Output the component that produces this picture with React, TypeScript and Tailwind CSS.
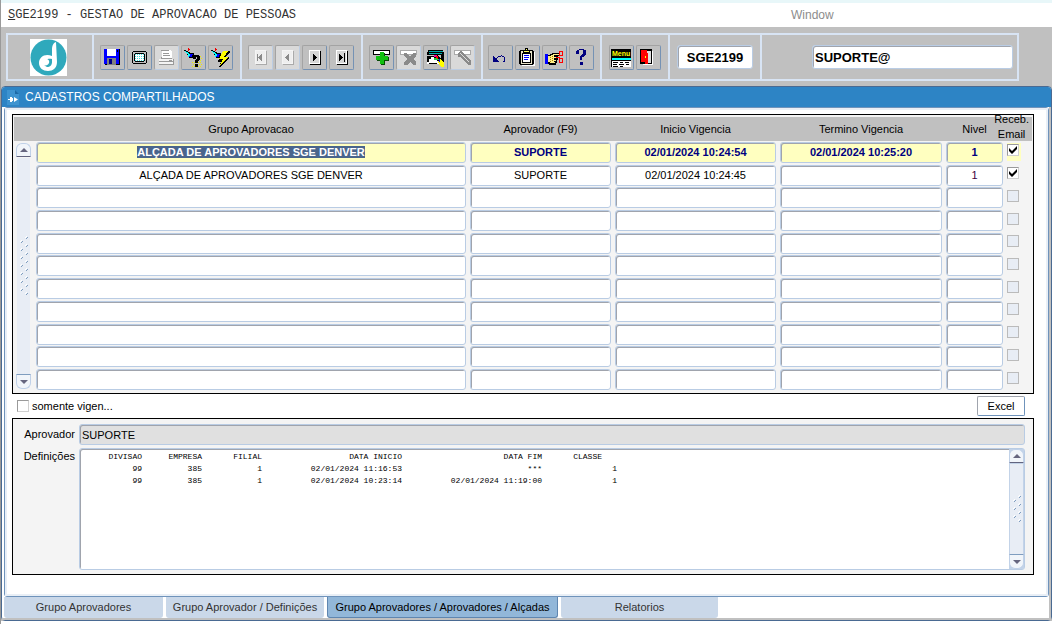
import { useEffect, useRef, type ReactNode } from 'react'

type Approver = { group: string; approver: string; start: string; end: string; level: string; email: boolean }

const approvers: (Approver | null)[] = [
  { group: 'ALÇADA DE APROVADORES SGE DENVER', approver: 'SUPORTE', start: '02/01/2024 10:24:54', end: '02/01/2024 10:25:20', level: '1', email: true },
  { group: 'ALÇADA DE APROVADORES SGE DENVER', approver: 'SUPORTE', start: '02/01/2024 10:24:45', end: '', level: '1', email: true },
  null, null, null, null, null, null, null, null, null,
]

const definitions = [
  ['99', '385', '1', '02/01/2024 11:16:53', '***', '1'],
  ['99', '385', '1', '02/01/2024 10:23:14', '02/01/2024 11:19:00', '1'],
]

const tabs = [
  { label: 'Grupo Aprovadores', width: 'w-[159px]' },
  { label: 'Grupo Aprovador / Definições', width: 'w-[158px]' },
  { label: 'Grupo Aprovadores / Aprovadores / Alçadas', width: 'w-[231px]', active: true },
  { label: 'Relatorios', width: 'w-[157px]' },
]

const field = 'border border-[#b9cce4] rounded-[3px] shadow-[inset_1px_1px_0_#a0a4ad] outline-none'

function Icon({ children }: { children: ReactNode }) {
  return <svg width="20" height="20" viewBox="0 0 20 20" overflow="visible" shapeRendering="crispEdges" aria-hidden="true">{children}</svg>
}

function ToolButton({ label, disabled, children }: { label: string; disabled?: boolean; children: ReactNode }) {
  return (
    <button
      type="button"
      aria-label={label}
      title={label}
      disabled={disabled}
      className={`w-[25px] h-[25px] p-px rounded-[2px] border border-t-[#a3a3a3] border-l-[#a3a3a3] ${disabled ? 'bg-[#d9d9d9] border-r-[#bccde3] border-b-[#bccde3]' : 'border-r-[#7592b4] border-b-[#7592b4]'}`}
    >
      <Icon>{children}</Icon>
    </button>
  )
}

function Group({ children, className = 'pl-[6px] pr-[7px]' }: { children: ReactNode; className?: string }) {
  return <div className={`flex items-center gap-[2px] border-r-2 border-[#d8e4f4] ${className}`}>{children}</div>
}

const Torch = () => (
  <g>
    <path d="M1 3h2v1h2v1h2v1h4v3h-1v2h-4v-1h-1v-2h-1v-2h-1v-1h-1v-1h-1z" fill="#000" />
    <path d="M2 4h1v1h2v1h1v1h1v1h-2v-1h-1v-1h-1v-1h-1z" fill="#0ff" />
    <path d="M7 7h3v1h-1v2h-3v-1h1z" fill="#00f" />
    <path d="M5 7h2v2h-1v1h-1z" fill="#0ff" />
    <path d="M5 1h1v1h1v1h-1v1h-1z" fill="#e00" />
  </g>
)

const Sheet = ({ off, children }: { off?: boolean; children: ReactNode }) => (
  <g>
    <path d="M6 4h11v14h-11z" fill={off ? '#aaa' : '#000'} />
    <path d="M5 3h11v14h-11z" fill={off ? '#f4f4f4' : '#fff'} />
    <path d="M6 4h9v12h-9z" fill={off ? '#eee' : '#d6d6d6'} />
    <g fill={off ? '#8a8a8a' : '#000'}>{children}</g>
  </g>
)

function Logo() {
  return (
    <svg width="37" height="37" viewBox="0 0 37 37" role="img" aria-label="Denver">
      <rect width="37" height="37" fill="#fff" />
      <circle cx="18.500" cy="18.500" r="18" fill="#2fa9bc" />
      <path d="M26 3c-3 1-4 4-4 8v6c-7-3-13 1-13 7 0 5 4 8 9 8s9-3 9-9z" fill="#fff" />
      <path d="M22 20c-3-1-8 0-8 4 0 2 1 3 3 4 3 0 5-2 5-5z" fill="#2fa9bc" />
      <path d="M14 20c3-1 6 1 5 4-1 2-3 3-5 2z" fill="#fff" />
    </svg>
  )
}

function ScrollBar({ grip, label }: { grip: string; label: string }) {
  return (
    <div aria-label={label} role="group" className="flex h-full w-[15px] flex-col items-center">
      <button type="button" aria-label="Subir" className="flex h-[14px] w-full shrink-0 items-center justify-center rounded-t-[6px] border border-[#c0d1e8] border-b-[#62647f] bg-[#f1f5fa]">
        <svg width="8" height="4" viewBox="0 0 8 4"><path d="M4 0l4 4H0z" fill="#66667f" /></svg>
      </button>
      <div className="mt-px flex w-[13px] flex-1 items-center justify-center bg-[#e8edf5]">
        <svg width="9" className={grip} aria-hidden="true">
          <defs>
            <pattern id={`grip-${label}`} width="9" height="8" patternUnits="userSpaceOnUse">
              <path d="M6 2l2-2M1 6l2-2" stroke="#fff" />
              <path d="M7 3l2-2M2 7l2-2" stroke="#7f9dbf" />
            </pattern>
          </defs>
          <rect width="9" height="100%" fill={`url(#grip-${label})`} />
        </svg>
      </div>
      <button type="button" aria-label="Descer" className="flex h-[15px] w-full shrink-0 items-center justify-center rounded-b-[6px] border border-[#c0d1e8] border-t-[#7f9dbf] bg-[#f1f5fa]">
        <svg width="8" height="4" viewBox="0 0 8 4"><path d="M0 0h8L4 4z" fill="#66667f" /></svg>
      </button>
    </div>
  )
}

function Toolbar() {
  return (
    <div className="bg-[#c0c0c0] pt-[6px] pb-[5px] pl-[5px] pr-[33px]">
      <div className="flex h-[48px] border-2 border-r-0 border-[#d8e4f4]">
        <Group className="w-[86px] pr-[3px] justify-center"><Logo /></Group>
        <Group>
          <ToolButton label="Salvar">
            <path d="M2 2h16v16h-15v-1h-1z" fill="#000" />
            <path d="M2 2h15v15h-15z" fill="#00f" />
            <path d="M5 2h9v7h-9z" fill="#fff" />
            <path d="M15 3h1v2h-1z" fill="#000" />
            <path d="M5 11h9v7h-9z" fill="#808080" />
            <path d="M7 12h3v5h-3z" fill="#000080" />
          </ToolButton>
          <ToolButton label="Tela">
            <path d="M4 4h13v1h1v11h-1v1h-13v-1h-1v-11h1z" fill="#000" />
            <path d="M5 6h11v9h-11z" fill="#c0c0c0" />
            <path d="M6 6h9v1h1v7h-1v1h-9v-1h-1v-7h1z" fill="#000" />
            <path d="M6 7h9v7h-9z" fill="#fff" />
            <path d="M6 7.500h9M6 9.500h9M6 11.500h9M6 13.500h9" stroke="#4dd" strokeDasharray="1 1" />
            <path d="M4.500 5.500h12v10h-12z" fill="none" stroke="#c0c0c0" />
          </ToolButton>
          <ToolButton label="Imprimir" disabled>
            <path d="M6 3h8l2 2v7h-10z" fill="#fff" />
            <path d="M5 3h8v1h-8zM7 6h6v1h-6zM7 8h7v1h-7zM5 10h1v1h10v1h-11z" fill="#999" />
            <path d="M3 12h14v5h-14z" fill="#f4f4f4" />
            <path d="M3 14h14v1h-14zM3 17h15v1h-15zM17 12h1v6h-1zM13 13h3v1h-3z" fill="#999" />
          </ToolButton>
          <ToolButton label="Consultar ajuda">
            <Torch />
            <path d="M15 9.500h4M16 11.500h3M15 13.500h4M9 15.500h10M10 17.500h9M9 19.500h10" stroke="#ee0" strokeDasharray="1 1" />
            <path d="M10 9h1v-1h5v1h1v4h-1v1h-1v2h-3v-3h1v-1h1v-2h-1v2h-3zM12 17h3v3h-3z" fill="#000" />
          </ToolButton>
          <ToolButton label="Executar consulta">
            <Torch />
            <path d="M13 4h7v1l-4 5h3v2l-9 8h-1l2-5h-3v-2l4-4z" fill="#000" />
            <path d="M13 4h5l-4 6h4l-8 8 3-6h-4z" fill="#ff0" />
          </ToolButton>
        </Group>
        <Group>
          <ToolButton label="Primeiro" disabled><Sheet off><path d="M7 7h1v7h-1zM12 7v7l-4-3.500z" /></Sheet></ToolButton>
          <ToolButton label="Anterior" disabled><Sheet off><path d="M12 7v7l-4-3.500z" /></Sheet></ToolButton>
          <ToolButton label="Proximo"><Sheet><path d="M9 6v9l4-4.500z" /></Sheet></ToolButton>
          <ToolButton label="Ultimo"><Sheet><path d="M8 6v9l4-4.500zM13 6h1v9h-1z" /></Sheet></ToolButton>
        </Group>
        <Group className="px-[6px]">
          <ToolButton label="Inserir">
            <path d="M2 3h17v5h-17z" fill="#000" />
            <path d="M3 4h15v3h-15z" fill="#fff" />
            <path d="M10 6h4v4h4v4h-4v4h-4v-4h-4v-4h4z" fill="#064b06" />
            <path d="M9 5h4v4h4v4h-4v4h-4v-4h-4v-4h4z" fill="#10c010" />
          </ToolButton>
          <ToolButton label="Excluir" disabled>
            <path d="M2 3h17v5h-17z" fill="#aaa" />
            <path d="M3 4h15v3h-15z" fill="#fff" />
            <path d="M6 6h3l3 4 3-4h3v3l-3 3 3 3v3h-3l-3-3-3 3h-3v-3l3-3-3-3z" fill="#8a8a8a" />
          </ToolButton>
          <ToolButton label="Entrar consulta">
            <path d="M3 3h15v2h1v12h-3v-9h-14v-3h1z" fill="#000" />
            <path d="M4 4h14v1h-14zM4 6h13v1h-13z" fill="#0aa" />
            <path d="M2 9h12l3 8h-15z" fill="#fff" />
            <path d="M2 9h8v1h-4v2h-2v3h-2zM4 16h8v1h-8z" fill="#000" />
            <path d="M8 9l3-2 6 6-3 3z" fill="#000" />
            <path d="M9 8h3v2h-3z" fill="#e0a" />
            <path d="M11 9h2v3h-2z" fill="#f00" />
            <path d="M9 11h3v2h-3zM12 12h2v1h-2z" fill="#2c4" />
            <path d="M15 11l4 5v4h-3l-3-5z" fill="#ff0" />
            <path d="M14 12h1v3h-1z" fill="#00f" />
          </ToolButton>
          <ToolButton label="Cancelar consulta" disabled>
            <path d="M2 3h17v5h-17z" fill="#aaa" />
            <path d="M3 4h15v3h-15z" fill="#fff" />
            <path d="M6 6l3-2 10 10v4h-3l-8-8h-2z" fill="#8a8a8a" />
            <path d="M8 6l2 2M10 8l7 7" stroke="#ddd" />
          </ToolButton>
        </Group>
        <Group className="pl-[5px] pr-[6px]">
          <ToolButton label="Desfazer">
            <path d="M3 9v6h6z" fill="#000080" />
            <path d="M6 13c2-5 9-6 9 0q0 1-2 2" fill="none" stroke="#000080" />
          </ToolButton>
          <ToolButton label="Colar">
            <path d="M17 5h1v14h-13v-1h12z" fill="#fff" />
            <path d="M3 3h13v1h1v13h-1v1h-13v-1h-1v-13h1z" fill="#000" />
            <path d="M4 4h11v13h-11z" fill="#e8e4c8" />
            <path d="M5 6h9v10h-9z" fill="#000" />
            <path d="M6 7h7v8h-7z" fill="#fff" />
            <path d="M7 8h5v1h-5zM7 10h5v1h-5zM7 12h4v1h-4z" fill="#00f" />
            <path d="M6 3h2v-2h3v2h2v3h-7z" fill="#000" />
            <path d="M7 4h5v1h-5zM9 2h1v1h-1z" fill="#ff6" />
          </ToolButton>
          <ToolButton label="Recortar">
            <path d="M1 7h3v10h-3z" fill="#00f" />
            <path d="M4 8h2v-1h2v-1h8v3h-2v4h-1v3h-1v2h-7v-1h-1z" fill="#000" />
            <path d="M4 9h3v-1h2v-1h6v1h-5v2h3v1h-3v2h2v1h-2v1h1v1h-5v-1h-2z" fill="#fe8" />
            <path d="M6 10h1v1h-1zM8 9h1v1h-1zM8 11h1v1h-1zM6 12h1v1h-1zM8 13h1v1h-1zM6 14h1v1h-1z" fill="#a80" />
            <path d="M15.500 4.500h3v4h-3zM15.500 11.500h3v4h-3zM12 10.500h4" fill="none" stroke="#f00" />
          </ToolButton>
          <ToolButton label="Ajuda">
            <path d="M6 3h2v-1h5v1h2v5h-1v1h-1v1h-2v3h-2v-4h1v-1h1v-1h1v-4h-4v4h-3v-3h1zM9 15h3v3h-3z" fill="#000080" />
          </ToolButton>
        </Group>
        <Group className="px-[7px]">
          <ToolButton label="Menu">
            <path d="M0 2h20v9h-20zM0 11h20v9h-20z" fill="#000" />
            <text x="1" y="9" fontSize="7" fontWeight="700" fill="#ff0" fontFamily="Liberation Sans, sans-serif">Menu</text>
            <path d="M1 11h19v2h-19z" fill="#0ff" />
            <path d="M1 14h19v6h-19z" fill="#fff" />
            <path d="M2 15h5v1h-5zM9 15h3v1h-3zM14 15h4v1h-4zM2 17h4v1h-4zM8 17h5v1h-5zM15 17h3v1h-3zM2 19h5v1h-5zM9 19h3v1h-3z" fill="#000" />
          </ToolButton>
          <ToolButton label="Sair">
            <path d="M14 4h1v14h-10v-1h9z" fill="#fff" />
            <path d="M2 2h12v15h-12z" fill="#000" />
            <path d="M9 4h4v12h-4z" fill="#ddd" />
            <path d="M3 3h6v3h1v11h-3v-2h-4z" fill="#f00" />
            <path d="M7 9h1v2h-1z" fill="#ff0" />
          </ToolButton>
        </Group>
        <Group className="px-[7px]">
          <input aria-label="Programa" readOnly defaultValue="SGE2199" className={`${field} h-[24px] w-[76px] bg-white text-center text-[13px] font-bold`} />
        </Group>
        <Group className="flex-1 pl-[50px] pr-[4px]">
          <input aria-label="Usuario" readOnly defaultValue="SUPORTE@" className={`${field} h-[24px] w-full bg-white px-[2px] text-[13px] font-bold`} />
        </Group>
      </div>
    </div>
  )
}

function Tick({ checked, disabled, label }: { checked?: boolean; disabled?: boolean; label: string }) {
  return (
    <span className="relative block h-[12px] w-[12px]">
      <input type="checkbox" aria-label={label} defaultChecked={checked} disabled={disabled} className="peer block h-[12px] w-[12px] appearance-none border border-[#9a9a9a] border-r-[#d0d0d0] border-b-[#d0d0d0] bg-white disabled:border-[#bbbbbb] disabled:bg-[#e8edf5]" />
      <svg viewBox="0 0 12 12" className="pointer-events-none absolute inset-0 hidden peer-checked:block" aria-hidden="true">
        <path d="M2 4l3 3 5-5v3l-5 5-3-3z" />
      </svg>
    </span>
  )
}

function ApproverGrid() {
  const current = useRef<HTMLInputElement>(null)

  useEffect(() => {
    current.current?.focus()
    current.current?.select()
  }, [])

  return (
    <section className="border border-black bg-[#f4f4f4] px-px pt-[2px] pb-[2px]">
      <table className="h-[274px] w-full table-fixed border-collapse text-[11px]">
        <colgroup>
          <col className="w-[20px]" />
          <col />
          <col className="w-[145px]" />
          <col className="w-[165px]" />
          <col className="w-[166px]" />
          <col className="w-[61px]" />
          <col className="w-[27px]" />
        </colgroup>
        <thead>
          <tr className="h-[24px] bg-[#c0c0c0] [&>th]:font-normal [&>th]:p-0">
            <th />
            <th>Grupo Aprovacao</th>
            <th>Aprovador (F9)</th>
            <th>Inicio Vigencia</th>
            <th>Termino Vigencia</th>
            <th>Nivel</th>
            <th className="relative"><span className="absolute right-[3px] -bottom-[1px] text-center leading-[15px]">Receb. Email</span></th>
          </tr>
        </thead>
        <tbody>
          {approvers.map((row, i) => {
            const selected = i === 0
            const cell = `${field} block h-[21px] w-full text-center ${selected ? 'bg-[#ffffc0] font-bold text-[#000080]' : 'bg-white'}`
            return (
              <tr key={i} className="[&>td]:p-0">
                {i === 0 && <td rowSpan={approvers.length} className="h-px"><div className="h-[246px] pl-[2px]"><ScrollBar label="registros" grip="h-[60px]" /></div></td>}
                <td><div className="px-[2px]"><input ref={selected ? current : undefined} aria-label="Grupo Aprovacao" defaultValue={row?.group} className={`${cell} selection:bg-[#4a658c] selection:text-white`} /></div></td>
                <td><div className="px-[2px]"><input aria-label="Aprovador" defaultValue={row?.approver} className={cell} /></div></td>
                <td><div className="px-[2px]"><input aria-label="Inicio Vigencia" defaultValue={row?.start} className={cell} /></div></td>
                <td><div className="px-[2px]"><input aria-label="Termino Vigencia" defaultValue={row?.end} className={cell} /></div></td>
                <td><div className="px-[2px]"><input aria-label="Nivel" defaultValue={row?.level} className={`${cell} ${selected ? '' : 'text-[#400040]'}`} /></div></td>
                <td><div className={`ml-[2px] w-[14px] pb-[5px] pt-px ${selected ? 'bg-[#ffffc0]' : ''}`}><Tick label="Recebe Email" checked={row?.email} disabled={!row} /></div></td>
              </tr>
            )
          })}
        </tbody>
      </table>
    </section>
  )
}

function Definitions() {
  return (
    <section className="border border-black bg-[#f4f4f4] pt-[5px] pb-1 pr-2 text-[11px]">
      <div className="flex items-center">
        <label htmlFor="aprovador" className="w-[66px] pr-1 text-right">Aprovador</label>
        <input id="aprovador" readOnly defaultValue="SUPORTE" className={`${field} h-[21px] flex-1 bg-[#e0e0e0] px-[2px]`} />
      </div>
      <div className="mt-[3px] flex">
        <span id="definicoes" className="w-[66px] pr-1 text-right">Definições</span>
        <div className={`${field} flex h-[122px] flex-1 bg-white`}>
          <div className="flex-1 overflow-hidden pt-[2px]">
            <table aria-labelledby="definicoes" className="table-fixed text-right font-['Liberation_Mono',monospace] text-[8px] leading-[12px] [&_td]:p-0 [&_th]:p-0 [&_th]:font-normal">
              <thead>
                <tr>
                  <th className="w-[62px]">DIVISAO</th>
                  <th className="w-[60px]">EMPRESA</th>
                  <th className="w-[60px]">FILIAL</th>
                  <th className="w-[140px]">DATA INICIO</th>
                  <th className="w-[140px]">DATA FIM</th>
                  <th className="w-[75px]"><span className="pr-[15px]">CLASSE</span></th>
                </tr>
              </thead>
              <tbody>
                {definitions.map((row, i) => <tr key={i}>{row.map((value, j) => <td key={j}>{value}</td>)}</tr>)}
              </tbody>
            </table>
          </div>
          <div className="bg-[#c3d3e8]"><ScrollBar label="definicoes" grip="h-[28px]" /></div>
        </div>
      </div>
    </section>
  )
}

export default function App() {
  return (
    <div className="min-h-screen border-l border-[#9a9a9a] bg-white font-['Liberation_Sans',Arial,sans-serif] text-black">
      <div className="h-[3px] bg-[#e8f7f9]" />
      <header className="flex h-[24px] items-center pl-[7px] text-[12px]">
        <h1 className="w-3/4 font-['Liberation_Mono',monospace] text-[#333333]"><u>S</u>GE2199 - GESTAO DE APROVACAO DE PESSOAS</h1>
        <button type="button" className="text-[#8c8c8c]">Window</button>
      </header>
      <Toolbar />
      <div className="bg-[#c0c0c0]">
        <main className="rounded-[4px] border border-[#4a6a92] bg-white">
          <div className="flex h-[20px] items-center gap-[6px] rounded-t-[3px] bg-[#2d84c5] pl-[5px] text-[12px] text-white">
            <svg width="12" height="15" viewBox="0 0 12 15" aria-hidden="true">
              <path d="M0 0h8l4 4v11H0z" fill="#3d93d0" />
              <path d="M8 0l4 4H8z" fill="#1d69a6" />
              <path d="M3 7h2v5H3zM1 9h3v1H1zM5 8h1v3H5zM7 7l4 2.500L7 12z" fill="#fff" />
            </svg>
            <h2>CADASTROS COMPARTILHADOS</h2>
          </div>
          <div className="border-r-2 border-b-2 border-[#c0c0c0] pl-[2px]">
            <div className="rounded-[3px] border border-[#6f93bb]">
              <div className="border-2 border-[#e9eff6] bg-white pl-[5px] pr-3 pt-1 pb-[19px]">
                <ApproverGrid />
                <div className="flex h-[24px] items-center justify-between pl-[5px] pr-[9px] text-[11px]">
                  <label className="flex items-center gap-[3px]"><Tick label="somente vigentes" />somente vigen...</label>
                  <button type="button" className="h-[20px] w-[48px] rounded-[2px] border border-[#a0a4ad] border-r-[#6f93bb] border-b-[#6f93bb] bg-white">Excel</button>
                </div>
                <Definitions />
              </div>
            </div>
            <nav className="flex gap-[3px]">
              {tabs.map(tab => (
                <button key={tab.label} type="button" aria-current={tab.active ? 'page' : undefined} className={`${tab.width} h-[21px] whitespace-nowrap rounded-b-[3px] text-[11px] ${tab.active ? 'border border-t-0 border-[#5f86b0] bg-[#92b7d9] text-black' : 'bg-[#cad8e9] text-[#333333]'}`}>{tab.label}</button>
              ))}
            </nav>
          </div>
        </main>
      </div>
    </div>
  )
}
